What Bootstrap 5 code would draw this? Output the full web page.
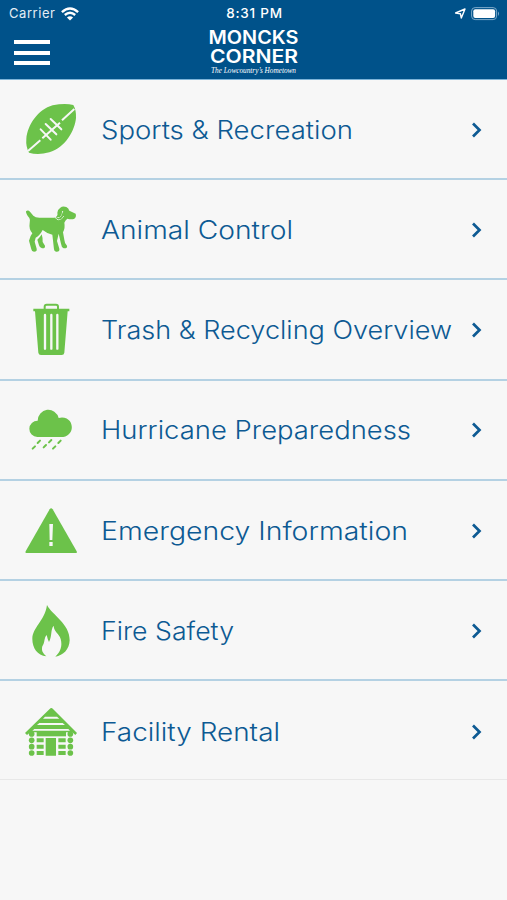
<!DOCTYPE html>
<html lang="en">
<head>
<meta charset="utf-8">
<meta name="viewport" content="width=device-width, initial-scale=1">
<title>Moncks Corner</title>
<link href="https://cdn.jsdelivr.net/npm/bootstrap@5.3.0/dist/css/bootstrap.min.css" rel="stylesheet">
<style>
body{background:#f7f7f7;font-family:Inter,"Liberation Sans",sans-serif;overflow:hidden}
.top-bar{height:80px;background:#00528a;border-bottom:1px solid #7db4d9;color:#fff}
.status{height:27px;font-size:13px;line-height:27px;padding:0 7px 0 9px}
.carrier{letter-spacing:.55px;color:#e4eef5}
.wifi{margin-left:6px}
.clock{font-weight:500;font-size:13.5px;letter-spacing:.75px}
.menu-btn{margin:13px 0 0 14px;width:36px;height:25px}
.menu-btn span{height:4px;background:#fff}
.town{width:96px;height:52px;overflow:visible}
.brand-row{height:52px}
.side{width:205px}
.service-row{height:100.2px;padding-top:1.6px;background:#f7f7f7;border-bottom:2px solid #b4d1e3!important;text-decoration:none}
.service-row:last-child{height:98.8px;padding-top:3px;border-bottom:1px solid #e8e8e8!important}
.pic{width:90px;height:90px;margin-left:10px;fill:#6cc24a;flex:none}
.label-svg{width:356px;height:40px;fill:#0d5a93;flex:none;overflow:visible}
.label-svg text{font-family:Inter,"Liberation Sans",sans-serif;font-size:25px;font-weight:300}
.chev{width:12px;height:18px;margin-left:15px;flex:none}
</style>
</head>
<body>
<header class="top-bar">
  <div class="status d-flex justify-content-between">
    <div class="side d-flex align-items-center"><span class="carrier">Carrier</span>
      <svg class="wifi" width="18" height="14" viewBox="0 0 18 14" fill="none" stroke="#fff" stroke-width="2.4"><path d="M.9 5.1Q9-2.3 17.1 5.1M3.8 8Q9 3.5 14.2 8"/><path d="M9 13.6 5.9 10.5Q9 8 12.1 10.5Z" fill="#fff" stroke="none"/></svg>
    </div>
    <div class="clock">8:31 PM</div>
    <div class="side d-flex justify-content-end align-items-center">
      <svg width="46" height="16" viewBox="0 0 46 16"><path d="M1.6 7 11 3 7.3 12 6.4 7.7Z" fill="none" stroke="#fff" stroke-width="1.4" stroke-linejoin="round"/><rect x="17.6" y="1.6" width="25" height="12" rx="3.5" fill="none" stroke="#7da9c9" stroke-width="1"/><rect x="19.3" y="3.2" width="21.8" height="8.9" rx="2" fill="#fff"/><path d="M44 5.5Q46 7.7 44 10Z" fill="#7da9c9"/></svg>
    </div>
  </div>
  <div class="brand-row d-flex align-items-start">
    <div class="side"><div class="menu-btn d-flex flex-column justify-content-between"><span></span><span></span><span></span></div></div>
    <svg class="town" viewBox="205 27 96 52" fill="#fff">
      <text x="208.500" y="44" textLength="90" lengthAdjust="spacingAndGlyphs" font-family="Inter, sans-serif" font-size="18.5" font-weight="600">MONCKS</text>
      <text x="210" y="62.5" textLength="88" lengthAdjust="spacingAndGlyphs" font-family="Inter, sans-serif" font-size="18.5" font-weight="600">CORNER</text>
      <text x="211" y="72.5" textLength="85" lengthAdjust="spacingAndGlyphs" font-family="'Liberation Serif', serif" font-size="7.500" font-style="italic">The Lowcountry’s Hometown</text>
    </svg>
  </div>
</header>
<main class="list-group list-group-flush rounded-0">
  <a class="service-row d-flex align-items-center" href="#">
    <svg class="pic" viewBox="0 -15 270 270"><path d="M190 45Q199 60 198 84C195 120 166 174 118 187Q84 196 57 188Q47 170 49 147C52 106 84 58 128 46Q165 38 190 45Z"/><path d="M54 183 91 151M97 145 150 98M156 91 193 57" stroke="#f7f7f7" stroke-width="6"/><path d="M92 118 122 149M107 102 139 133M122 87 154 118" stroke="#f7f7f7" stroke-width="6" stroke-linecap="round"/></svg>
    <svg class="label-svg"><text x="1" y="29" textLength="252" lengthAdjust="spacingAndGlyphs">Sports &amp; Recreation</text></svg>
    <svg class="chev" viewBox="0 0 12 18"><path d="M2 2.500 8.500 9 2 15.500" fill="none" stroke="#0d5a93" stroke-width="2.7"/></svg>
  </a>
  <a class="service-row d-flex align-items-center" href="#">
    <svg class="pic" viewBox="0 285 270 270"><path d="M48 364Q54 359 60 365L70 377Q76 383 88 383H133Q145 379 142 368Q142 359 151 353Q158 347 169 351Q176 355 178 362L197 371Q200 380 193 386Q185 390 172 386Q166 391 163 398Q166 414 159 427L163 449Q164 462 171 467Q173 476 161 475Q154 471 153 461L146 431L141 453L148 476Q150 486 138 485Q132 484 132 478L127 434Q110 430 98 420Q89 437 77 443L74 455L80 476Q82 485 72 485Q65 485 64 478L57 452Q61 437 67 430Q56 418 59 399Q62 391 58 384Q47 371 48 364Z"/><path d="M95 433Q98 441 98 456L105 467Q106 476 96 475Q89 474 87 466L82 449Q89 444 95 433Z"/><path d="M158 363Q158 373 153 379Q149 385 142 383M137 371Q134 389 146 389Q157 388 161 378" fill="none" stroke="#f7f7f7" stroke-width="3"/><path d="M141 383Q149 386 154 377Q158 371 157 364L160 377Q156 388 147 388Q139 387 141 383Z"/></svg>
    <svg class="label-svg"><text x="1" y="29" textLength="192" lengthAdjust="spacingAndGlyphs">Animal Control</text></svg>
    <svg class="chev" viewBox="0 0 12 18"><path d="M2 2.500 8.500 9 2 15.500" fill="none" stroke="#0d5a93" stroke-width="2.7"/></svg>
  </a>
  <a class="service-row d-flex align-items-center" href="#">
    <svg class="pic" viewBox="0 -15 270 270"><path d="M104 58V50Q104 44 110 44H138Q144 44 144 50V58" fill="none" stroke="#6cc24a" stroke-width="6"/><path d="M70 56H178V64H173L163 188Q162 195 155 195H93Q86 195 85 188L75 64H70Z"/><path d="M105 75V176M124 75V176M142 75V176" stroke="#f7f7f7" stroke-width="7" stroke-linecap="round"/></svg>
    <svg class="label-svg"><text x="1" y="29" textLength="351" lengthAdjust="spacingAndGlyphs">Trash &amp; Recycling Overview</text></svg>
    <svg class="chev" viewBox="0 0 12 18"><path d="M2 2.500 8.500 9 2 15.500" fill="none" stroke="#0d5a93" stroke-width="2.7"/></svg>
  </a>
  <a class="service-row d-flex align-items-center" href="#">
    <svg class="pic" viewBox="0 285 270 270"><path d="M82 441A24.500 24.500 0 0 1 83 392A32 33 0 0 1 146 384A29.500 29.500 0 1 1 160 441Z"/><path d="M68 476 75 469M83 459 90 452M101 472 108 465M117 457 124 450M129 476 136 469M145 459 152 452" stroke="#6cc24a" stroke-width="6" stroke-linecap="round"/></svg>
    <svg class="label-svg"><text x="1" y="29" textLength="310" lengthAdjust="spacingAndGlyphs">Hurricane Preparedness</text></svg>
    <svg class="chev" viewBox="0 0 12 18"><path d="M2 2.500 8.500 9 2 15.500" fill="none" stroke="#0d5a93" stroke-width="2.7"/></svg>
  </a>
  <a class="service-row d-flex align-items-center" href="#">
    <svg class="pic" viewBox="0 -15 270 270"><path d="M119 55Q123 49 128 55L200 181Q202 186 197 186H50Q45 186 47 181Z"/><path d="M118 99H129L127 147H119ZM118 153H128V165H118Z" fill="#f7f7f7"/></svg>
    <svg class="label-svg"><text x="1" y="29" textLength="307" lengthAdjust="spacingAndGlyphs">Emergency Information</text></svg>
    <svg class="chev" viewBox="0 0 12 18"><path d="M2 2.500 8.500 9 2 15.500" fill="none" stroke="#0d5a93" stroke-width="2.7"/></svg>
  </a>
  <a class="service-row d-flex align-items-center" href="#">
    <svg class="pic" viewBox="0 285 270 270"><path d="M111 342C127 373 179 397 179 448C178 475 160 494 136 497C151 483 158 466 152 444C147 426 132 424 131 404C121 416 127 435 117 453Q113 446 110 432C101 442 106 453 97 466C94 477 97 486 109 496C82 493 67 471 67 444C67 409 104 391 111 342Z"/></svg>
    <svg class="label-svg"><text x="1" y="29" textLength="133" lengthAdjust="spacingAndGlyphs">Fire Safety</text></svg>
    <svg class="chev" viewBox="0 0 12 18"><path d="M2 2.500 8.500 9 2 15.500" fill="none" stroke="#0d5a93" stroke-width="2.7"/></svg>
  </a>
  <a class="service-row d-flex align-items-center" href="#">
    <svg class="pic" viewBox="0 -15 270 270"><path d="M119 51Q124 45 129 51L201 123 196 129 187 121H61L51 129 45 123Z"/><path d="M105 74H141L148 80H99ZM88 93H158L165 99H81ZM73 111H175L180 116H67Z" fill="#f7f7f7"/><rect x="80" y="119" width="88" height="14"/><path d="M107 138H138V191H107ZM80 139H101V151H80ZM80 158H101V170H80ZM80 177H101V189H80ZM145 139H167V151H145ZM145 158H167V170H145ZM145 177H167V189H145Z"/><circle cx="65" cy="126" r="8.500"/><circle cx="65" cy="145" r="8.500"/><circle cx="65" cy="164" r="8.500"/><circle cx="65" cy="183" r="8.500"/><circle cx="181" cy="126" r="8.500"/><circle cx="181" cy="145" r="8.500"/><circle cx="181" cy="164" r="8.500"/><circle cx="181" cy="183" r="8.500"/></svg>
    <svg class="label-svg"><text x="1" y="29" textLength="179" lengthAdjust="spacingAndGlyphs">Facility Rental</text></svg>
    <svg class="chev" viewBox="0 0 12 18"><path d="M2 2.500 8.500 9 2 15.500" fill="none" stroke="#0d5a93" stroke-width="2.7"/></svg>
  </a>
</main>
<script src="https://cdn.jsdelivr.net/npm/bootstrap@5.3.0/dist/js/bootstrap.bundle.min.js"></script>
</body>
</html>
